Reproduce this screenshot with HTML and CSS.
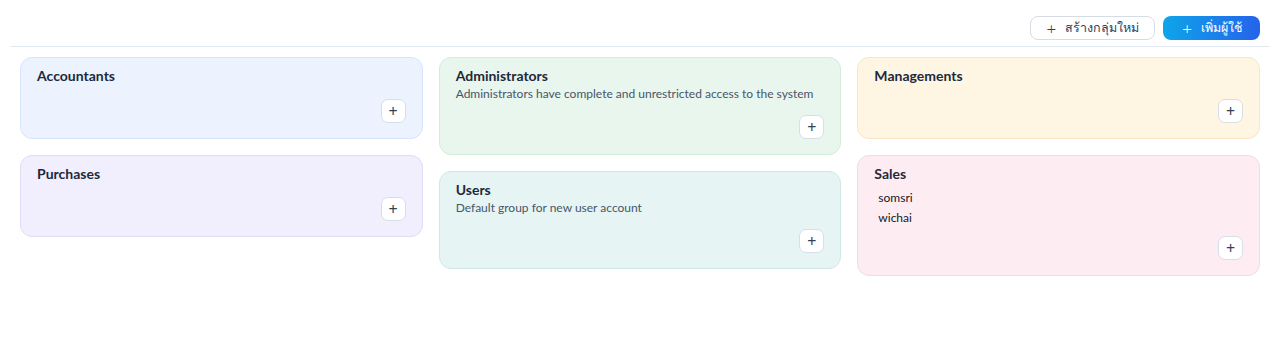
FILE: index.html
```html
<!DOCTYPE html>
<html lang="th">
<head>
<meta charset="utf-8">
<link rel="stylesheet" href="styles.css">
</head>
<body>
<div class="page">
  <div class="toolbar">
    <button class="btn btn-outline"><span class="btn-plus">+</span>สร้างกลุ่มใหม่</button>
    <button class="btn btn-primary"><span class="btn-plus">+</span>เพิ่มผู้ใช้</button>
  </div>
  <div class="grid">
    <div class="col">
      <div class="card blue">
        <div class="card-title">Accountants</div>
        <div class="card-foot"><button class="add">+</button></div>
      </div>
      <div class="card violet">
        <div class="card-title">Purchases</div>
        <div class="card-foot"><button class="add">+</button></div>
      </div>
    </div>
    <div class="col">
      <div class="card green">
        <div class="card-title">Administrators</div>
        <div class="card-desc">Administrators have complete and unrestricted access to the system</div>
        <div class="card-foot"><button class="add">+</button></div>
      </div>
      <div class="card teal">
        <div class="card-title">Users</div>
        <div class="card-desc">Default group for new user account</div>
        <div class="card-foot"><button class="add">+</button></div>
      </div>
    </div>
    <div class="col">
      <div class="card amber">
        <div class="card-title">Managements</div>
        <div class="card-foot"><button class="add">+</button></div>
      </div>
      <div class="card pink">
        <div class="card-title">Sales</div>
        <ul class="members">
          <li>somsri</li>
          <li>wichai</li>
        </ul>
        <div class="card-foot"><button class="add">+</button></div>
      </div>
    </div>
  </div>
</div>
</body>
</html>
```

FILE: styles.css
```css
* { box-sizing: border-box; }
html, body { margin: 0; background: #fff; }
body {
  font-family: Lato, "Noto Sans", sans-serif;
  color: #1e293b;
}
.page { padding: 0 10px; }
.toolbar {
  display: flex;
  justify-content: flex-end;
  gap: 8px;
  padding: 16px 10px 6px;
  border-bottom: 1px solid #e2e8f0;
}
.btn {
  display: inline-flex;
  align-items: center;
  height: 24px;
  padding: 0 15px 0 16px;
  border-radius: 8px;
  font-family: "Noto Sans", sans-serif;
  font-size: 12.5px;
  cursor: pointer;
}
.btn-plus {
  font-size: 17px;
  font-weight: 300;
  margin-right: 9px;
  line-height: 1;
}
.btn-outline {
  background: #fff;
  border: 1px solid #d5dce6;
  color: #334155;
}
.btn-primary {
  background: linear-gradient(90deg, #0ea5e9, #2563eb);
  border: 0;
  color: #fff;
  padding-left: 19px;
  padding-right: 18px;
}
.grid {
  display: grid;
  grid-template-columns: repeat(3, 1fr);
  gap: 16px;
  padding: 10px 10px 0;
  align-items: start;
}
.col {
  display: flex;
  flex-direction: column;
  gap: 16px;
}
.card {
  border: 1px solid;
  border-radius: 12px;
  padding: 8px 16px 15px;
}
.card-title {
  font-size: 14px;
  font-weight: 700;
  line-height: 20px;
  color: #1e293b;
}
.card-desc {
  font-size: 12px;
  line-height: 16px;
  color: #475569;
}
.members {
  list-style: none;
  margin: 4px 0 -5px;
  padding: 0 0 0 4px;
  font-size: 12px;
  line-height: 20px;
  color: #111827;
}
.card-foot {
  display: flex;
  justify-content: flex-end;
  margin-top: 13px;
}
.add {
  width: 25px;
  height: 24px;
  border: 1px solid #d8dee8;
  border-radius: 7px;
  background: #fff;
  color: #334155;
  font-family: "Noto Sans", sans-serif;
  font-size: 16px;
  line-height: 1;
  padding: 0;
  display: flex;
  align-items: center;
  justify-content: center;
}
.blue { background: #ecf3fe; border-color: #d6e5fb; }
.green { background: #e9f6ee; border-color: #d3ecdc; }
.amber { background: #fef6e3; border-color: #f8e6c3; }
.violet { background: #f1eefd; border-color: #e2dbf8; }
.teal { background: #e6f5f4; border-color: #cfe8e6; }
.pink { background: #fdedf3; border-color: #f5d9e3; }
```
